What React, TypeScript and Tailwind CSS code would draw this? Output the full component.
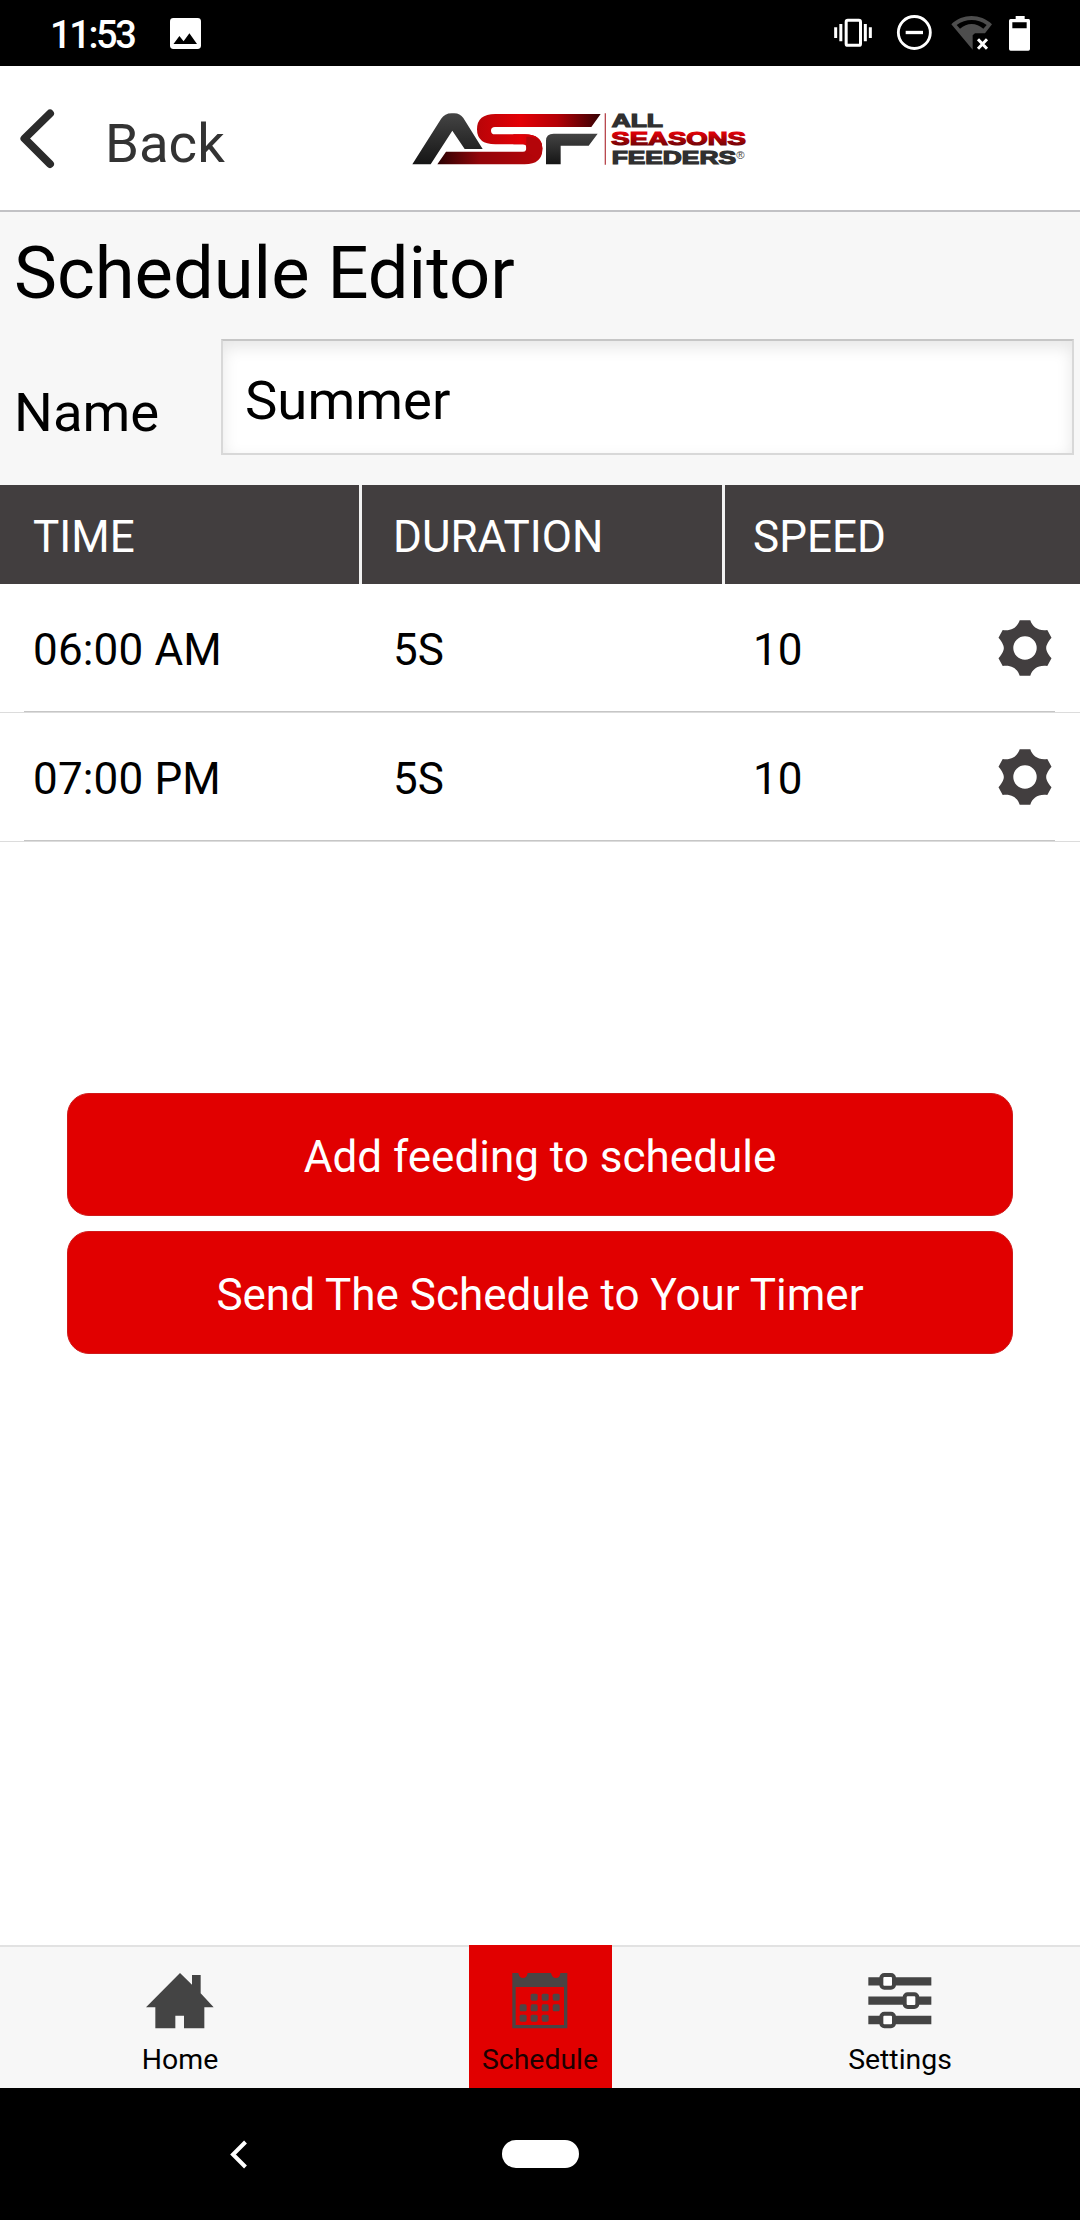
import type { ReactNode } from "react";

const feedings = [
  { time: "06:00 AM", duration: "5S", speed: "10" },
  { time: "07:00 PM", duration: "5S", speed: "10" },
];

function StatusBar() {
  return (
    <div className="flex h-[66px] items-start bg-black text-white">
      <span className="ml-[50px] mt-[12px] w-[88px] whitespace-nowrap text-[38px] font-medium leading-[46px] tracking-[-2.4px]">
        11:53
      </span>
      <svg className="ml-[32px] mt-[18px] h-[31px] w-[31px]" viewBox="0 0 31 31">
        <rect width="31" height="31" rx="3.4" fill="white" />
        <path d="M3.5 26 9.4 18 13.6 23.2 19.4 15.3 27 26Z" fill="black" />
      </svg>
      <svg className="ml-auto mr-[50px] h-[66px] w-[196px]" viewBox="0 0 588 198" fill="none">
        <g stroke="white">
          <rect x="36.500" y="61" width="43" height="75" rx="5" strokeWidth="9" />
          <path d="M5 82V114M20.500 72V124M94 72V124M109 82V114" strokeWidth="9" />
          <circle cx="241" cy="97.500" r="48" strokeWidth="8.500" />
          <path d="M215 97.500H267" strokeWidth="10" />
        </g>
        <path d="M352 73C385 40 440 40 474 73L453 100H423L416 106V149Z" fill="#4d4d4d" />
        <path d="M368 75C395 55 431 55 458 75L448 86C427 67 399 67 378 86Z" fill="black" />
        <path d="M432 118 459 146M459 118 432 146" stroke="white" strokeWidth="9" />
        <path d="M545 48H572V57H584Q588 57 588 62V147Q588 152 583 152H530Q525 152 525 147V62Q525 57 530 57H545ZM535 67V85H578V67Z" fill="white" fillRule="evenodd" />
      </svg>
    </div>
  );
}

function Logo() {
  return (
    <svg className="mt-[34px] h-[80px] w-[360px]" viewBox="0 0 1080 240" role="img" aria-label="ASF All Seasons Feeders">
      <defs>
        <linearGradient id="dark" x1="0" y1="0" x2="0" y2="1">
          <stop offset="0" stopColor="#444444" />
          <stop offset="1" stopColor="#151515" />
        </linearGradient>
        <linearGradient id="redTop" x1="0" y1="0" x2="1" y2="0">
          <stop offset="0" stopColor="#b80408" />
          <stop offset="0.35" stopColor="#e30006" />
          <stop offset="0.65" stopColor="#b40006" />
          <stop offset="1" stopColor="#350204" />
        </linearGradient>
        <linearGradient id="redLow" x1="0" y1="0" x2="1" y2="0">
          <stop offset="0" stopColor="#2a0203" />
          <stop offset="0.4" stopColor="#920509" />
          <stop offset="1" stopColor="#b80509" />
        </linearGradient>
        <linearGradient id="redText" x1="0" y1="0" x2="0" y2="1">
          <stop offset="0.2" stopColor="#e00007" />
          <stop offset="0.85" stopColor="#6b0306" />
        </linearGradient>
      </defs>
      <path d="M37 193 123 57Q134 40 155 40H163Q180 40 190 54L248 147H194L157 92 92 193Z" fill="url(#dark)" />
      <path d="M112 193 138 155H369Q379 155 379 146V141Q379 133 369 133H340V103H374Q427 103 427 147 427 193 374 193Z" fill="url(#redLow)" />
      <path d="M602 42 574 81H285Q273 81 273 92 273 103 285 103H374Q427 103 427 147L379 141Q379 133 369 133H286Q231 133 231 88 231 42 286 42Z" fill="url(#redTop)" />
      <path d="M379 110H385Q427 112 427 147 427 165 414 178L376 153Q379 150 379 146Z" fill="#b40509" />
      <path d="M438 193V122Q438 101 461 101H593L566 137H482V193Z" fill="url(#dark)" />
      <path d="M616 40V194" stroke="#b94a50" strokeWidth="4" />
      <g className="font-['Liberation_Sans'] font-bold" fontSize="55">
        <text x="635" y="80" textLength="154" lengthAdjust="spacingAndGlyphs" fill="#303030" stroke="#303030" strokeWidth="3.500">ALL</text>
        <text x="634" y="136" textLength="404" lengthAdjust="spacingAndGlyphs" fill="url(#redText)" stroke="url(#redText)" strokeWidth="3.500">SEASONS</text>
        <text x="635" y="193" textLength="373" lengthAdjust="spacingAndGlyphs" fill="#303030" stroke="#303030" strokeWidth="3.500">FEEDERS</text>
        <text x="1009" y="177" fontSize="34" fill="#444444" className="font-normal">®</text>
      </g>
    </svg>
  );
}

function Header() {
  return (
    <header className="flex h-[146px] items-start border-b-2 border-[#c2c2c5] bg-white">
      <button className="flex w-[400px] items-start text-left text-[#333333]">
        <svg className="ml-[18px] mt-[41px] h-[64px] w-[40px]" viewBox="0 0 40 64" fill="none">
          <path d="M32 6.500 6.500 31.500 32 57" stroke="#2b2b2b" strokeWidth="8" strokeLinecap="round" strokeLinejoin="round" />
        </svg>
        <span className="ml-[47px] mt-[45px] text-[54.500px] leading-[64px]">Back</span>
      </button>
      <Logo />
    </header>
  );
}

function Gear() {
  return (
    <svg className="mr-[25px] h-[60px] w-[60px]" viewBox="-30 -30 60 60">
      <path
        fillRule="evenodd"
        fill="#423e3f"
        d="M-5.300-27.700H5.300C7.500-21 13-16.800 22.300-18L26.500-10.300C21-4 21-0 21.300 0 21 0 21 4 26.500 10.300L22.300 18C13 16.800 7.500 21 5.300 27.700H-5.300C-7.500 21-13 16.800-22.300 18L-26.500 10.300C-21 4-21 0-21.300 0-21 0-21-4-26.500-10.300L-22.300-18C-13-16.800-7.500-21-5.300-27.700ZM0-11.700A11.700 11.700 0 1 0 0 11.700 11.700 11.700 0 1 0 0-11.700Z"
      />
    </svg>
  );
}

function FeedingTable() {
  return (
    <section className="text-[44px] leading-[52px]">
      <div className="grid h-[99px] grid-cols-3 items-stretch bg-[#423e3f] text-white">
        <div className="-mr-[2px] border-r-[3px] border-[#f2f2f2] pl-[33px] pt-[26px]">TIME</div>
        <div className="-mr-[5px] ml-[2px] border-r-[3px] border-[#f2f2f2] pl-[31px] pt-[26px]">DURATION</div>
        <div className="pl-[33px] pt-[26px]">SPEED</div>
      </div>
      {feedings.map((f) => (
        <div key={f.time} className="flex h-[129px] flex-col border-b border-[#dcdcdc] text-black">
          <div className="grid flex-1 grid-cols-3 items-center">
            <div className="pl-[33px] pt-[4px] tracking-[0.15px]">{f.time}</div>
            <div className="pl-[33px] pt-[4px]">{f.duration}</div>
            <div className="flex items-center justify-between pl-[33px]">
              <span className="pt-[4px]">{f.speed}</span>
              <Gear />
            </div>
          </div>
          <div className="ml-[24px] mr-[25px] h-px bg-[#c6c6c6]" />
        </div>
      ))}
    </section>
  );
}

function ActionButton({ children }: { children: ReactNode }) {
  return (
    <button className="h-[123px] rounded-[22px] border border-[#cf1a1a] bg-[#e10000] pt-[4px] text-[44px] leading-[52px] text-white">
      {children}
    </button>
  );
}

function HomeIcon() {
  return (
    <svg className="h-[56px] w-[68px]" viewBox="0 0 204 168" fill="#444444">
      <path d="M0 103 102 0 138 35V6H164V61L203 103H175V166H114V128H88V166H28V103Z" />
    </svg>
  );
}

function CalendarIcon() {
  const dots = [
    [66, 72], [99, 72], [132, 72],
    [33, 104], [66, 104], [99, 104], [132, 104],
    [33, 135], [66, 135], [99, 135],
  ];
  return (
    <svg className="h-[56px] w-[56px]" viewBox="0 0 168 168">
      <path d="M1 0H19Q21 15 33 15T47 0H117Q120 15 132 15T145 0H166V166H1ZM11 42V156H156V42Z" fill="#4a4444" fillRule="evenodd" />
      {dots.map(([x, y]) => (
        <rect key={`${x}-${y}`} x={x - 10} y={y - 10} width="21" height="21" rx="5" fill="#514444" />
      ))}
    </svg>
  );
}

function SlidersIcon() {
  return (
    <svg className="h-[56px] w-[64px]" viewBox="0 0 192 168">
      <path d="M1 25H190M1 83H190M1 141H190" stroke="#444444" strokeWidth="25" />
      {[[59, 25], [129, 83], [59, 141]].map(([x, y]) => (
        <rect key={y} x={x - 19} y={y - 19} width="38" height="38" rx="9" fill="white" stroke="#444444" strokeWidth="12" />
      ))}
    </svg>
  );
}

function Tab({ icon, label, active }: { icon: ReactNode; label: string; active?: boolean }) {
  return (
    <button
      className={
        active
          ? "-mt-[2px] flex h-[143px] w-[143px] flex-col items-center bg-[#e10000] pt-[28px] text-[#1c0000]"
          : "-mt-[2px] flex h-[143px] w-[143px] flex-col items-center pt-[28px] text-black"
      }
    >
      {icon}
      <span className="mt-[14px] text-[28.400px] leading-[34px]">{label}</span>
    </button>
  );
}

export default function App() {
  return (
    <div className="flex h-[2220px] w-[1080px] flex-col overflow-hidden bg-white font-[Roboto,sans-serif]">
      <StatusBar />
      <Header />
      <section className="h-[273px] bg-[#f7f7f7] text-black">
        <h1 className="pl-[14px] pt-[20px] text-[72.300px] leading-[84px]">Schedule Editor</h1>
        <div className="mt-[23px] flex items-start">
          <label className="mt-[41px] w-[221px] pl-[14px] text-[54.500px] leading-[64px]">Name</label>
          <div className="h-[116px] w-[853px] border-2 border-t-[#c6c6c6] border-r-[#d8d8d8] border-b-[#d8d8d8] border-l-[#d8d8d8] bg-white pl-[22px] pt-[27px] text-[54.500px] leading-[64px] shadow-[inset_0_6px_16px_rgba(0,0,0,0.100)]">
            Summer
          </div>
        </div>
      </section>
      <FeedingTable />
      <div className="mx-[67px] mt-[251px] flex flex-col gap-[15px]">
        <ActionButton>Add feeding to schedule</ActionButton>
        <ActionButton>Send The Schedule to Your Timer</ActionButton>
      </div>
      <nav className="mt-auto flex h-[143px] shrink-0 justify-around border-t-2 border-[#e2e2e2] bg-[#f7f7f7]">
        <Tab icon={<HomeIcon />} label="Home" />
        <Tab icon={<CalendarIcon />} label="Schedule" active />
        <Tab icon={<SlidersIcon />} label="Settings" />
      </nav>
      <div className="flex h-[132px] shrink-0 items-start bg-black">
        <svg className="ml-[229px] mt-[52px] h-[29px] w-[19px]" viewBox="0 0 19 29" fill="none">
          <path d="M16.500 2 4 14.500 16.500 27" stroke="white" strokeWidth="4" />
        </svg>
        <div className="ml-[254px] mt-[52px] h-[28px] w-[77px] rounded-full bg-white" />
      </div>
    </div>
  );
}
